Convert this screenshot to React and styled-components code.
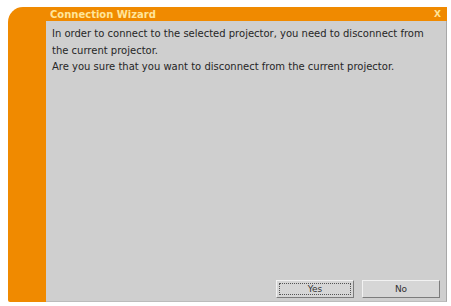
import React from "react";
import styled, { createGlobalStyle } from "styled-components";

const Global = createGlobalStyle`
  html, body { margin: 0; padding: 0; background: #ffffff; }
  body { font-family: Tahoma, "DejaVu Sans", "Liberation Sans", sans-serif; }
`;

const Page = styled.div`
  width: 451px;
  height: 306px;
  padding: 7px 4px 4px 8px;
  box-sizing: border-box;
`;

const Frame = styled.div`
  width: 100%;
  height: 100%;
  background: #f08a00;
  border-radius: 15px 0 2px 2px;
  display: grid;
  grid-template-columns: 38px 1fr;
  grid-template-rows: 14px 1fr;
`;

const TitleBar = styled.div`
  grid-column: 2;
  grid-row: 1;
  display: flex;
  align-items: center;
  justify-content: space-between;
  padding: 0 6px 0 4px;
  color: #ffe59a;
  font-family: "DejaVu Sans", sans-serif;
  font-size: 10px;
  font-weight: bold;
`;

const Close = styled.span`
  font-size: 9px;
  font-weight: bold;
  color: #ffe59a;
`;

const Panel = styled.div`
  grid-column: 2;
  grid-row: 2;
  background: #cfcfcf;
  border-right: 1px solid #a8a8a8;
  border-bottom: 1px solid #bcbcbc;
  display: flex;
  flex-direction: column;
  padding: 5px 6px 3px 6px;
`;

const Message = styled.p`
  margin: 0;
  font-family: "DejaVu Sans", sans-serif;
  font-size: 10px;
  line-height: 16.5px;
  color: #262626;
`;

const Buttons = styled.div`
  margin-top: auto;
  display: flex;
  justify-content: flex-end;
  gap: 8px;
`;

const Button = styled.button`
  width: 78px;
  height: 18px;
  box-sizing: border-box;
  background: #d6d6d6;
  border: 1px solid #f2f2f2;
  border-right-color: #7c7c7c;
  border-bottom-color: #7c7c7c;
  font-family: "DejaVu Sans", sans-serif;
  font-size: 9px;
  color: #333;
  padding: 0;
  outline: ${(p) => (p.$focused ? "1px dotted #555" : "none")};
  outline-offset: -4px;
`;

export default function App() {
  return (
    <Page>
      <Global />
      <Frame>
        <TitleBar>
          <span>Connection Wizard</span>
          <Close>X</Close>
        </TitleBar>
        <Panel>
          <Message>
            In order to connect to the selected projector, you need to disconnect from
            <br />
            the current projector.
            <br />
            Are you sure that you want to disconnect from the current projector.
          </Message>
          <Buttons>
            <Button $focused>Yes</Button>
            <Button>No</Button>
          </Buttons>
        </Panel>
      </Frame>
    </Page>
  );
}
